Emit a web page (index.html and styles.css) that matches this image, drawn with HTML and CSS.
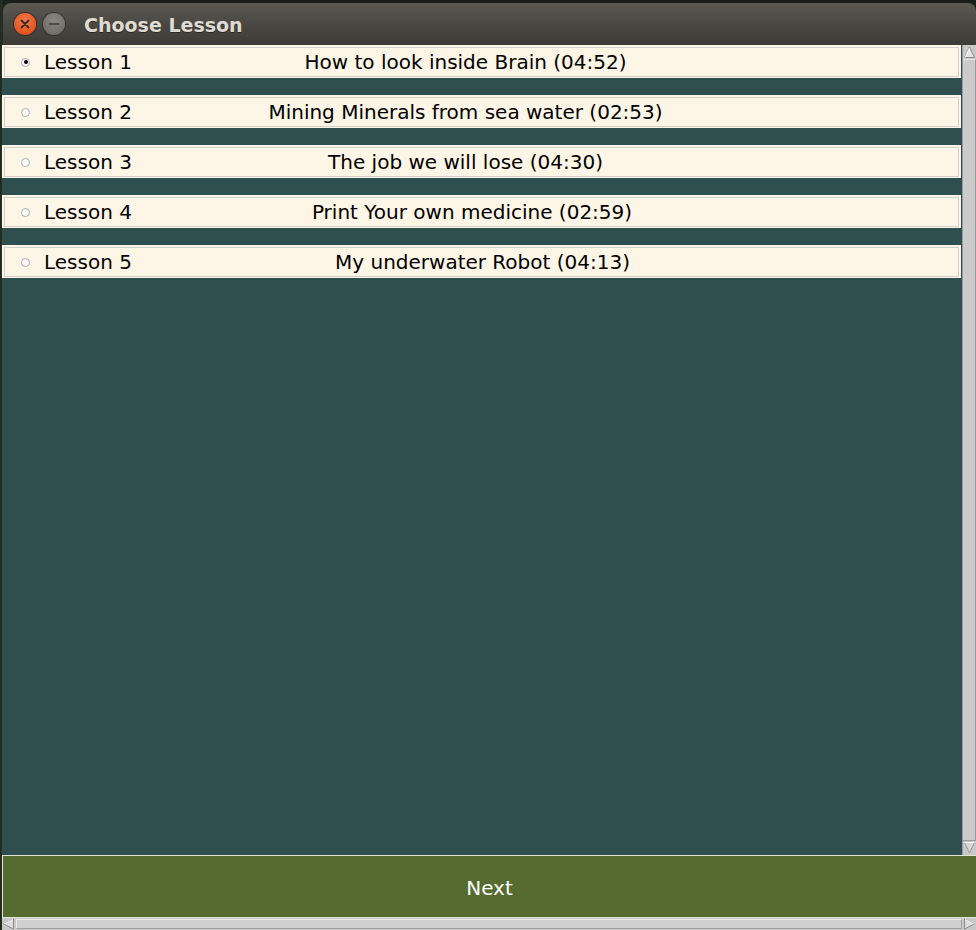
FILE: index.html
```html
<!DOCTYPE html>
<html>
<head>
<meta charset="utf-8">
<title>Choose Lesson</title>
<link rel="stylesheet" href="styles.css">
</head>
<body>
<div class="desktop">
  <div class="window">
    <div class="titlebar">
      <span class="wbtn close">
        <svg width="22" height="22" viewBox="0 0 22 22"><path d="M7.5 7.5 L14.5 14.5 M14.5 7.5 L7.5 14.5" stroke="#3a2a22" stroke-width="1.8" stroke-linecap="round"/></svg>
      </span>
      <span class="wbtn minimize">
        <svg width="22" height="22" viewBox="0 0 22 22"><path d="M6.5 11 H15.5" stroke="#3c3b37" stroke-width="1.6" stroke-linecap="round"/></svg>
      </span>
      <span class="title">Choose Lesson</span>
    </div>
    <div class="body">
      <div class="list">
        <div class="lessons">
          <div class="row"><div class="inner"><span class="left"><span class="radio checked"></span><span class="label">Lesson 1</span></span><span class="name">How to look inside Brain (04:52)</span></div></div>
          <div class="row"><div class="inner"><span class="left"><span class="radio"></span><span class="label">Lesson 2</span></span><span class="name">Mining Minerals from sea water (02:53)</span></div></div>
          <div class="row"><div class="inner"><span class="left"><span class="radio"></span><span class="label">Lesson 3</span></span><span class="name">The job we will lose (04:30)</span></div></div>
          <div class="row"><div class="inner"><span class="left"><span class="radio"></span><span class="label">Lesson 4</span></span><span class="name name-4">Print Your own medicine (02:59)</span></div></div>
          <div class="row"><div class="inner"><span class="left"><span class="radio"></span><span class="label">Lesson 5</span></span><span class="name name-5">My underwater Robot (04:13)</span></div></div>
        </div>
        <div class="vscroll">
          <span class="arrow">
            <svg width="13" height="14" viewBox="0 0 13 14"><path d="M1.5 12.5 L6.5 2 L11.5 12.5 Z" fill="#e4e4e4" stroke="#8c8c8c" stroke-width="1"/><path d="M2 12.5 L6.5 3" stroke="#fff" stroke-width="1"/></svg>
          </span>
          <span class="trough"></span>
          <span class="arrow">
            <svg width="13" height="14" viewBox="0 0 13 14"><path d="M1.5 1.5 L6.5 12 L11.5 1.5 Z" fill="#d6d6d6" stroke="#9a9a9a" stroke-width="1"/><path d="M1.5 1.5 H11.5" stroke="#fff" stroke-width="1"/></svg>
          </span>
        </div>
      </div>
      <div class="next">Next</div>
      <div class="hscroll">
        <span class="harrow">
          <svg width="13" height="12" viewBox="0 0 13 12"><path d="M11.5 1 L1.5 6 L11.5 11 Z" fill="#dcdcdc" stroke="#8c8c8c" stroke-width="1"/><path d="M11 1.5 L2 6" stroke="#fff" stroke-width="1"/></svg>
        </span>
        <span class="htrough"></span>
        <span class="harrow">
          <svg width="13" height="12" viewBox="0 0 13 12"><path d="M1.5 1 L11.5 6 L1.5 11 Z" fill="#dcdcdc" stroke="#8c8c8c" stroke-width="1"/><path d="M2 1.5 L11 6" stroke="#fff" stroke-width="1"/></svg>
        </span>
      </div>
    </div>
  </div>
</div>
</body>
</html>
```

FILE: styles.css
```css
* { box-sizing: border-box; }
html, body { margin: 0; padding: 0; }
body {
  width: 976px;
  height: 930px;
  overflow: hidden;
  background: #1b1f1a;
  font-family: "DejaVu Sans", "Liberation Sans", sans-serif;
}
.desktop {
  width: 976px;
  height: 930px;
  padding: 3px 0 0 2px;
  background: linear-gradient(90deg, #20261f 0px, #2c3328 2px, #1b1f1a 3px);
}
.window {
  width: 974px;
  display: flex;
  flex-direction: column;
}
.titlebar {
  height: 42px;
  margin-left: 1px;
  border-radius: 8px 8px 0 0;
  background: linear-gradient(#5c5951, #4a4843 50%, #3c3b37);
  display: flex;
  align-items: center;
  padding-left: 11px;
}
.wbtn {
  width: 22px;
  height: 22px;
  border-radius: 50%;
  display: flex;
  margin-right: 7px;
}
.close {
  background: radial-gradient(circle at 50% 35%, #f47a4e, #e55b26 60%, #c9461b);
  box-shadow: 0 0 0 1px #3a2f28;
}
.minimize {
  background: radial-gradient(circle at 50% 35%, #8a8780, #77746d 60%, #66635d);
  box-shadow: 0 0 0 1px #34332f;
}
.title {
  margin-left: 12px;
  margin-top: 1px;
  font-weight: bold;
  font-size: 19px;
  color: #dfdbd2;
  text-shadow: 0 1px 0 #2a2926;
}
.body {
  background: #2f4f4f;
  display: flex;
  flex-direction: column;
}
.list {
  height: 810px;
  display: flex;
}
.lessons {
  flex: 1;
  display: flex;
  flex-direction: column;
  gap: 17px;
  padding-top: 0;
}
.row {
  height: 33px;
  margin-right: 1px;
  background: #fdf5e6;
  padding: 2px 2px 1px 2px;
}
.inner {
  height: 100%;
  border: 1px solid #d3d0cb;
  display: grid;
  align-items: center;
  font-size: 20px;
  color: #000;
}
.left {
  grid-area: 1 / 1;
  display: flex;
  align-items: center;
  padding-left: 16px;
}
.name {
  grid-area: 1 / 1;
  text-align: center;
  padding-right: 32px;
}
.name-4 {
  padding-right: 19px;
}
.name-5 {
  padding-right: 0;
  padding-left: 2px;
}
.radio {
  width: 9px;
  height: 9px;
  border-radius: 50%;
  background: #fff;
  border: 1px solid #a9a9a9;
  margin-right: 14px;
  display: flex;
  align-items: center;
  justify-content: center;
}
.radio.checked::after {
  content: "";
  width: 4px;
  height: 4px;
  border-radius: 50%;
  background: #000;
}
.vscroll {
  width: 14px;
  background: #c8c8c8;
  border-left: 1px solid #9b9b9b;
  display: flex;
  flex-direction: column;
}
.arrow {
  height: 14px;
  display: flex;
}
.trough {
  flex: 1;
  background: #cbcbcb;
  border-top: 1px solid #e8e8e8;
  border-bottom: 1px solid #9a9a9a;
  border-right: 1px solid #9a9a9a;
}
.next {
  height: 63px;
  padding-top: 2px;
  background: #556b2f;
  border: 1px solid #e0e4d8;
  border-right: none;
  color: #fff;
  font-size: 20px;
  display: flex;
  align-items: center;
  justify-content: center;
}
.hscroll {
  height: 12px;
  background: #c8c8c8;
  display: flex;
}
.harrow {
  width: 13px;
  display: flex;
}
.htrough {
  flex: 1;
  margin: 1px 1px;
  background: #d0d0d0;
  border: 1px solid #ececec;
  border-right-color: #a0a0a0;
  border-bottom-color: #a0a0a0;
}
```
